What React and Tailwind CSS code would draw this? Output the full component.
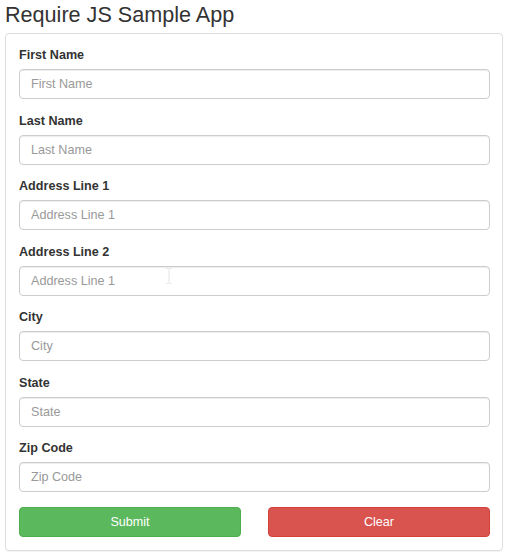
import React from "react";

const fields = [
  { label: "First Name", placeholder: "First Name" },
  { label: "Last Name", placeholder: "Last Name" },
  { label: "Address Line 1", placeholder: "Address Line 1" },
  { label: "Address Line 2", placeholder: "Address Line 1", cursor: true },
  { label: "City", placeholder: "City" },
  { label: "State", placeholder: "State" },
  { label: "Zip Code", placeholder: "Zip Code" },
];

export default function App() {
  return (
    <div className="bg-white min-h-[558px] text-[#333] font-['Liberation_Sans',Arial,sans-serif]">
      <h1 className="pl-[5px] pt-[2px] text-[21.6px] leading-[25px] font-normal">Require JS Sample App</h1>
      <div className="ml-[5px] mt-[6px] w-[498px] border border-[#ddd] rounded-[4px] pt-[11px] pb-[13px] pl-[13px] pr-[12px] shadow-[0_1px_1px_rgba(0,0,0,0.05)]">
        <div className="flex flex-col gap-[11.5px]">
          {fields.map((f) => (
            <div key={f.label}>
              <label className="block text-[12.6px] leading-[20px] font-bold mb-[4px]">{f.label}</label>
              <div className="relative">
                <input
                  type="text"
                  placeholder={f.placeholder}
                  className="block w-full h-[30px] border border-[#ccc] rounded-[4px] px-[11px] text-[12.6px] text-[#555] placeholder:text-[#999] shadow-[inset_0_1px_1px_rgba(0,0,0,0.075)] outline-none bg-white"
                />
                {f.cursor && (
                  <svg className="absolute left-[147px] top-[2px] pointer-events-none" width="6" height="16" viewBox="0 0 6 16">
                    <path d="M0.5 0.5h2M3.5 0.5h2M3 1v14M0.5 15.5h2M3.5 15.5h2" stroke="#e4e4e4" strokeWidth="1" fill="none" />
                  </svg>
                )}
              </div>
            </div>
          ))}
        </div>
        <div className="mt-[15px] grid grid-cols-2 gap-[27px]">
          <button className="h-[30px] rounded-[4px] bg-[#5cb85c] border border-[#4cae4c] text-white text-[12.6px]">Submit</button>
          <button className="h-[30px] rounded-[4px] bg-[#d9534f] border border-[#d43f3a] text-white text-[12.6px]">Clear</button>
        </div>
      </div>
    </div>
  );
}
